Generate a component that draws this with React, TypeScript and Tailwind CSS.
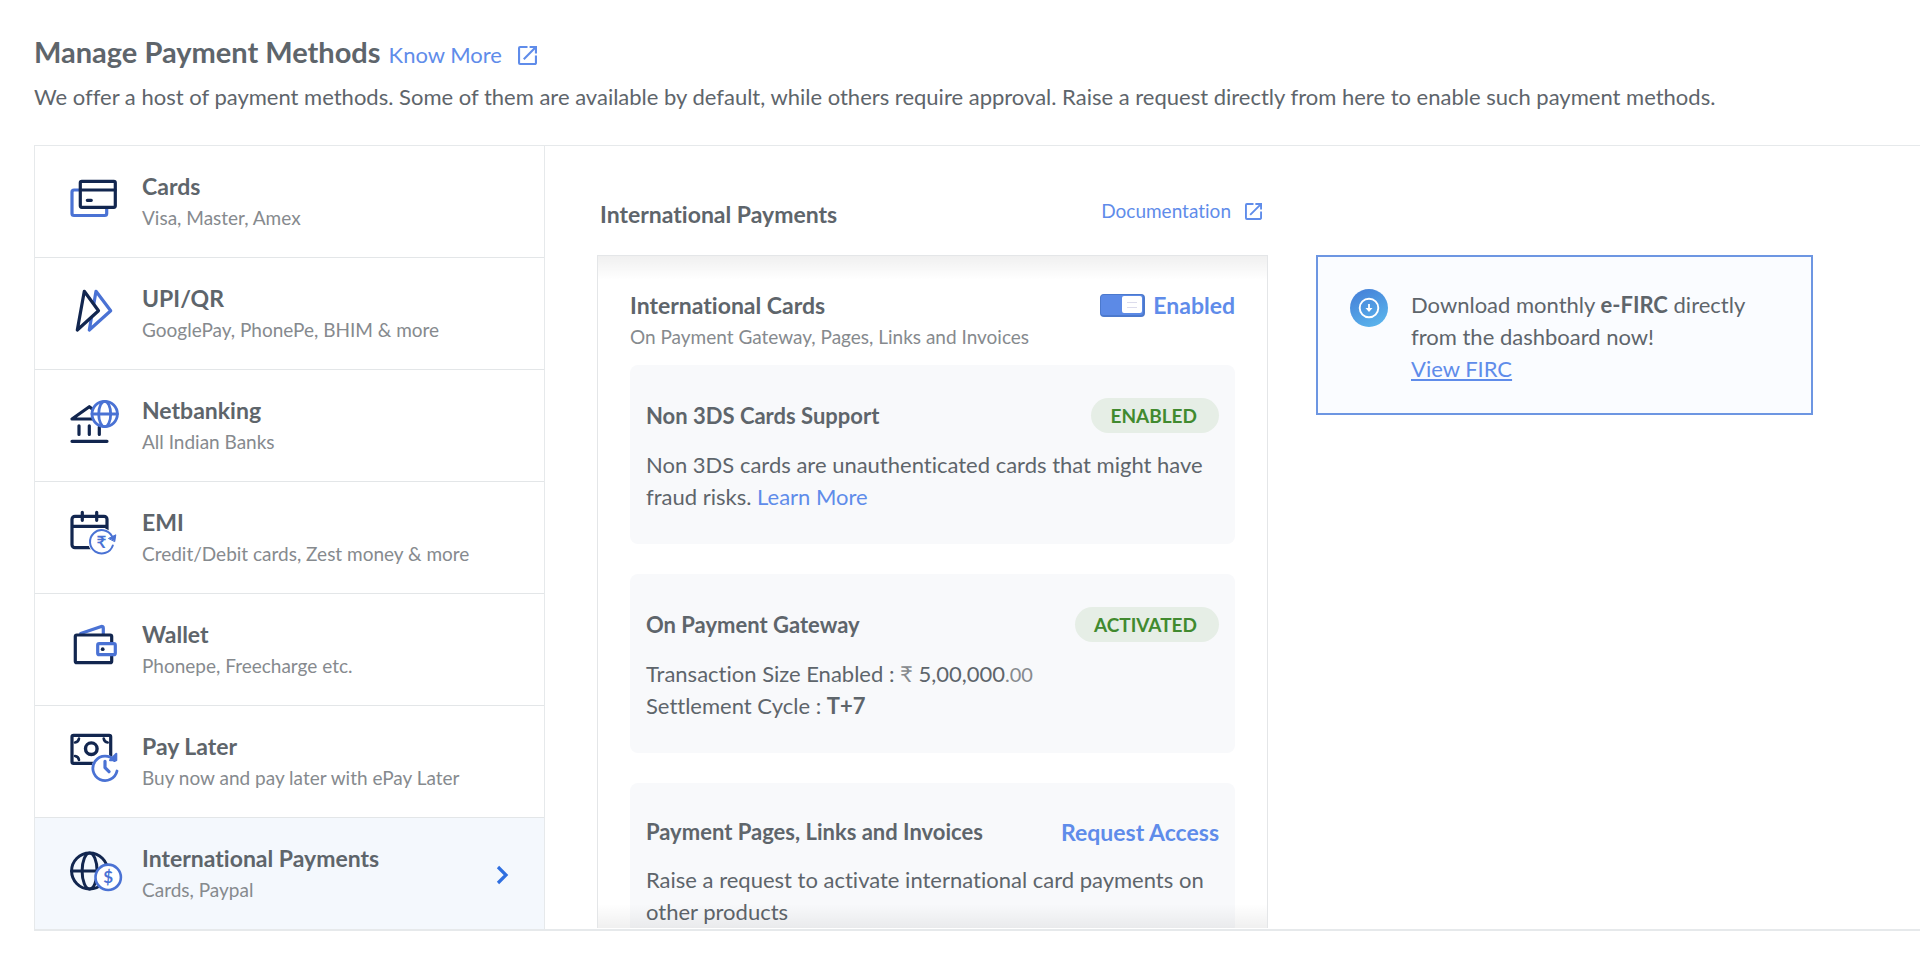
import type { ReactNode } from "react";

const NAVY = "#12264f";
const BLUE = "#4a72d4";

function IconFrame({ children }: { children: ReactNode }) {
  return (
    <svg
      viewBox="0 0 56 56"
      className="size-14 shrink-0"
      fill="none"
      strokeWidth="3.200"
      strokeLinecap="round"
      strokeLinejoin="round"
      aria-hidden="true"
    >
      {children}
    </svg>
  );
}

const CardsIcon = () => (
  <IconFrame>
    <path d="M11 20H6a2 2 0 0 0-2 2v21.500a2 2 0 0 0 2 2h30.700a2 2 0 0 0 2-2V38" stroke={BLUE} />
    <rect x="12.300" y="11.300" width="35" height="26" rx="1.500" stroke={NAVY} />
    <path d="M12.500 20h34.500M19.300 30.300h4" stroke={NAVY} />
  </IconFrame>
);

const UpiIcon = () => (
  <IconFrame>
    <path d="M28 9.300 42.700 28.700 21.300 48Z" stroke={BLUE} />
    <path d="M16.300 9.300 30.500 28.700 9.300 48Z" stroke={NAVY} fill="#fff" />
  </IconFrame>
);

const BankIcon = () => (
  <IconFrame>
    <path d="M25 25H4L21.300 12.700 25 15.500M11 31.800v8.700M21.300 31.800v8.700M31.300 33v7.500M4 47.300h35" stroke={NAVY} />
    <g stroke={BLUE} strokeWidth="2.800">
      <circle cx="36.700" cy="20" r="12.700" fill="#fff" />
      <ellipse cx="36.700" cy="20" rx="6" ry="12.700" />
      <path d="M24 20h25.400" />
    </g>
  </IconFrame>
);

const EmiIcon = () => (
  <IconFrame>
    <rect x="4" y="10.300" width="35" height="31.400" rx="3" stroke={NAVY} />
    <path d="M4.500 20.300h34M14.300 6.300v8M28.700 6.300v8" stroke={NAVY} />
    <circle cx="33.700" cy="35.700" r="13.500" fill="#fff" />
    <path d="M44.800 39.500A11.700 11.700 0 1 1 44 30.200" stroke={BLUE} strokeWidth="2" />
    <path d="M40.800 32.300 47.800 28.800 46.800 35.300Z" stroke={BLUE} fill={BLUE} strokeWidth="1" />
    <text x="33.500" y="41.500" textAnchor="middle" fontSize="17" fontWeight="700" fill={BLUE} fontFamily="Lato, 'Noto Sans', sans-serif">
      ₹
    </text>
  </IconFrame>
);

const WalletIcon = () => (
  <IconFrame>
    <path d="M12.700 15.500 33.300 8.500a1.500 1.500 0 0 1 2 1.400v6" stroke={BLUE} />
    <rect x="7.300" y="17" width="36.400" height="27.700" rx="1.500" stroke={NAVY} />
    <rect x="29.700" y="25.700" width="17.600" height="11" rx="1.500" stroke={BLUE} fill="#fff" />
    <circle cx="34.700" cy="31.200" r="1.900" fill={NAVY} />
  </IconFrame>
);

const PayLaterIcon = () => (
  <IconFrame>
    <rect x="4" y="5.300" width="38.700" height="28" rx="1.500" stroke={NAVY} />
    <circle cx="23.300" cy="18.700" r="5.800" stroke={NAVY} strokeWidth="3.400" />
    <path d="M7 12.500q3.500-.5 4-4M39.700 12.500q-3.500-.5-4-4M7 26q3.500.5 4 4" stroke={NAVY} strokeWidth="2.600" />
    <circle cx="37" cy="38.300" r="13.500" fill="#fff" />
    <path d="M49 41A12.200 12.200 0 1 1 46.500 30.600" stroke={BLUE} strokeWidth="2.800" />
    <path d="M48.300 23.700v6.500h-6.300Z" stroke={BLUE} fill={BLUE} strokeWidth="2" />
    <path d="M37 31.300v6.400l4 4" stroke={BLUE} />
  </IconFrame>
);

const GlobeMoneyIcon = () => (
  <IconFrame>
    <g stroke={NAVY} strokeWidth="3">
      <circle cx="21.600" cy="29" r="18" />
      <ellipse cx="21.600" cy="29" rx="7.500" ry="18" />
      <path d="M3.600 29h36" />
    </g>
    <circle cx="40.200" cy="35.300" r="12.700" fill="#fff" stroke={BLUE} strokeWidth="2.600" />
    <text x="40.200" y="41.200" textAnchor="middle" fontSize="17" fontWeight="700" fill={BLUE} fontFamily="Lato, sans-serif">
      $
    </text>
  </IconFrame>
);

function ExternalIcon({ className }: { className: string }) {
  return (
    <svg viewBox="3 3 18 18" className={className} fill="currentColor" aria-hidden="true">
      <path d="M19 19H5V5h7V3H5a2 2 0 0 0-2 2v14a2 2 0 0 0 2 2h14c1.100 0 2-.9 2-2v-7h-2v7zM14 3v2h3.590l-9.830 9.830 1.410 1.410L19 6.410V10h2V3h-7z" />
    </svg>
  );
}

const methods = [
  { name: "Cards", detail: "Visa, Master, Amex", Icon: CardsIcon },
  { name: "UPI/QR", detail: "GooglePay, PhonePe, BHIM & more", Icon: UpiIcon },
  { name: "Netbanking", detail: "All Indian Banks", Icon: BankIcon },
  { name: "EMI", detail: "Credit/Debit cards, Zest money & more", Icon: EmiIcon },
  { name: "Wallet", detail: "Phonepe, Freecharge etc.", Icon: WalletIcon },
  { name: "Pay Later", detail: "Buy now and pay later with ePay Later", Icon: PayLaterIcon },
  { name: "International Payments", detail: "Cards, Paypal", Icon: GlobeMoneyIcon, selected: true },
];

function MethodList() {
  return (
    <nav aria-label="Payment methods" className="w-[510px] shrink-0 border-r border-[#e6e9eb]">
      <ul className="divide-y divide-[#e3e6e8]">
        {methods.map(({ name, detail, Icon, selected }) => (
          <li key={name}>
            <button
              type="button"
              aria-current={selected ? "page" : undefined}
              className={`flex w-full items-start gap-[18px] pt-6 pr-[35px] pb-6 pl-[33px] text-left ${selected ? "bg-[#f4f8fd]" : "bg-white"}`}
            >
              <Icon />
              <span className="min-w-0 flex-1">
                <span className="block text-[23px] leading-8 font-bold">{name}</span>
                <span className="block text-[19px] leading-[31px] text-[#868a8e]">{detail}</span>
              </span>
              {selected && (
                <svg viewBox="0 0 14 20" className="mt-[23px] h-5 w-3.5" fill="none" stroke="#2f6fe0" strokeWidth="3.200" aria-hidden="true">
                  <path d="m3 2 8 8-8 8" />
                </svg>
              )}
            </button>
          </li>
        ))}
      </ul>
    </nav>
  );
}

function ProductCard({ title, action, children }: { title: string; action: ReactNode; children: ReactNode }) {
  return (
    <section className="rounded-lg bg-[#f8f9fb] px-4 pt-[33px] pb-[31px]">
      <div className="flex items-center justify-between">
        <h4 className="text-[22px] leading-8 font-bold">{title}</h4>
        {action}
      </div>
      <div className="mt-4 text-[22px] leading-8">{children}</div>
    </section>
  );
}

function Badge({ children }: { children: ReactNode }) {
  return (
    <span className="rounded-full bg-[#e6eee6] pr-[22px] pl-[19px] text-[19px] leading-[35px] font-bold text-[#418a2f]">
      {children}
    </span>
  );
}

function InternationalPanel() {
  return (
    <div className="w-[671px] pt-[49px]">
      <div className="flex items-start justify-between pr-1.5 pl-[3px]">
        <h2 className="pt-[3px] text-[23px] leading-8 font-bold">International Payments</h2>
        <a href="#documentation" className="flex items-center gap-3.5 text-[19px] leading-8 text-[#5f8cea]">
          Documentation
          <ExternalIcon className="size-[17px]" />
        </a>
      </div>
      <div className="relative mt-[25px] border border-b-0 border-[#e4e6e8]">
        <div className="h-[672px] overflow-y-auto px-8 pt-[33px] pb-8 [scrollbar-width:none]">
          <div className="flex items-center justify-between">
            <h3 className="text-[23px] leading-8 font-bold">International Cards</h3>
            <label className="flex cursor-pointer items-center gap-2 text-[23px] leading-8 font-bold text-[#5f8cea]">
              <input type="checkbox" role="switch" defaultChecked className="peer sr-only" />
              <span className="flex h-[23px] w-[45px] items-center justify-start rounded-sm border border-r-2 border-b-2 border-[#4c79cd] bg-[#5c8ae6] px-px peer-checked:justify-end">
                <span className="flex h-[17px] w-5 flex-col items-center justify-center gap-1 rounded-xs bg-white">
                  <span className="h-px w-2.5 bg-[#dcdcec]" />
                  <span className="h-px w-2.5 bg-[#dcdcec]" />
                </span>
              </span>
              Enabled
            </label>
          </div>
          <p className="text-[19px] leading-[31px] text-[#868a8e]">On Payment Gateway, Pages, Links and Invoices</p>
          <div className="mt-[13px] flex flex-col gap-[30px]">
            <ProductCard title="Non 3DS Cards Support" action={<Badge>ENABLED</Badge>}>
              <p>
                Non 3DS cards are unauthenticated cards that might have fraud risks.{" "}
                <a href="#learn-more" className="text-[#5f8cea]">
                  Learn More
                </a>
              </p>
            </ProductCard>
            <ProductCard title="On Payment Gateway" action={<Badge>ACTIVATED</Badge>}>
              <p>
                Transaction Size Enabled : <span className="text-[#868a8e]">₹</span> 5,00,000
                <span className="text-[20px] text-[#868a8e]">.00</span>
              </p>
              <p>
                Settlement Cycle : <strong>T+7</strong>
              </p>
            </ProductCard>
            <ProductCard
              title="Payment Pages, Links and Invoices"
              action={
                <button type="button" className="text-[23px] leading-8 font-bold text-[#5f8cea]">
                  Request Access
                </button>
              }
            >
              <p>Raise a request to activate international card payments on other products</p>
            </ProductCard>
          </div>
        </div>
        <div className="pointer-events-none absolute inset-x-0 top-0 h-6 bg-linear-to-b from-black/6 to-transparent" />
        <div className="pointer-events-none absolute inset-x-0 bottom-0 h-6 bg-linear-to-t from-black/6 to-transparent" />
      </div>
    </div>
  );
}

function FircNotice() {
  return (
    <aside className="mt-[109px] flex max-w-[497px] flex-1 items-start gap-[22px] self-start border-2 border-[#6d96e2] bg-[#fafcff] pt-8 pr-8 pb-7 pl-[31px] text-[22px] leading-8">
      <svg viewBox="0 0 40 40" className="size-10 shrink-0" fill="none" aria-hidden="true">
        <defs>
          <linearGradient id="notice-badge" x1="0.200" y1="0" x2="0.700" y2="1">
            <stop offset="0" stopColor="#4580d8" />
            <stop offset="1" stopColor="#5ab4ec" />
          </linearGradient>
        </defs>
        <circle cx="20" cy="19" r="19" fill="url(#notice-badge)" />
        <circle cx="20" cy="19" r="9.300" stroke="#fff" strokeWidth="1.900" />
        <path d="M20 15v5" stroke="#fff" strokeWidth="1.800" />
        <path d="M16.500 19h7L20 23Z" fill="#fff" />
      </svg>
      <div>
        <p>
          Download monthly <strong>e-FIRC</strong> directly from the dashboard now!
        </p>
        <a href="#firc" className="text-[#5f8cea] underline underline-offset-2">
          View FIRC
        </a>
      </div>
    </aside>
  );
}

export default function App() {
  return (
    <div className="min-h-screen bg-white pt-[34px] pb-12 pl-[34px] font-[Lato,'Noto_Sans',sans-serif] text-[#5e656b] [font-variant-ligatures:none]">
      <header>
        <div className="flex items-baseline gap-2">
          <h1 className="text-[29px] leading-9 font-bold">Manage Payment Methods</h1>
          <a href="#know-more" className="flex items-center gap-4 text-[22px] leading-8 text-[#5f8cea]">
            Know More
            <ExternalIcon className="size-[19px]" />
          </a>
        </div>
        <p className="mt-2.5 text-[22px] leading-8">
          We offer a host of payment methods. Some of them are available by default, while others require approval. Raise a
          request directly from here to enable such payment methods.
        </p>
      </header>
      <main className="mt-8 flex border-t border-b-2 border-l border-[#e6e9eb]">
        <MethodList />
        <div className="flex min-w-0 flex-1 gap-12 pr-8 pl-[52px]">
          <InternationalPanel />
          <FircNotice />
        </div>
      </main>
    </div>
  );
}
